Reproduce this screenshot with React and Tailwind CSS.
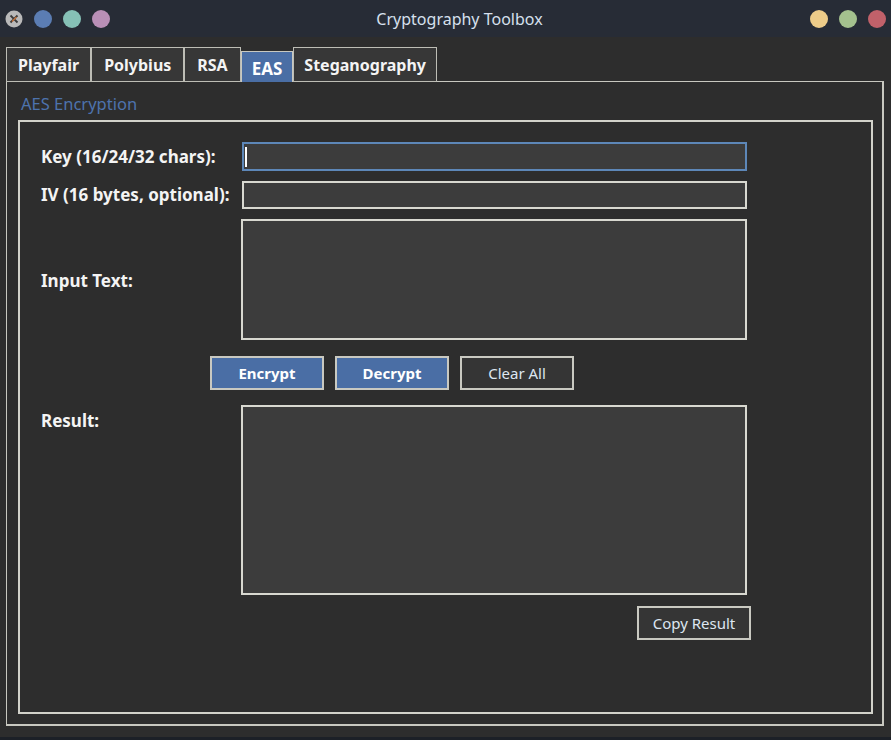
import React from 'react';

const tabs = [
  { name: 'Playfair', pad: 'px-[11px]' },
  { name: 'Polybius', pad: 'px-[12px]' },
  { name: 'RSA', pad: 'px-[12px]' },
  { name: 'EAS', pad: 'px-[10px]' },
  { name: 'Steganography', pad: 'px-[10px]' },
];

function Dot({ color }) {
  return <span className={`block w-[18px] h-[18px] rounded-full ${color}`} />;
}

export default function App() {
  return (
    <div
      className="w-[891px] h-[740px] bg-[#2d2d2d] flex flex-col overflow-hidden"
      style={{ fontFamily: '"Noto Sans", "Open Sans", sans-serif' }}
    >
      {/* title bar */}
      <div className="h-[37px] bg-[#272c36] flex items-center px-[5px] shrink-0">
        <div className="flex items-center gap-[11px] w-[120px]">
          <svg width="18" height="18" viewBox="0 0 18 18">
            <circle cx="9" cy="9" r="8.5" fill="#b9b9b9" />
            <path d="M5.5 5.5 L12.5 12.5 M12.5 5.5 L5.5 12.5" stroke="#3a3a3a" strokeWidth="1.8" />
            <path d="M7 11.5 L11.5 7" stroke="#c8733a" strokeWidth="1.2" />
          </svg>
          <Dot color="bg-[#5b7db3]" />
          <Dot color="bg-[#86c1b6]" />
          <Dot color="bg-[#b98fb6]" />
        </div>
        <div className="flex-1 text-center text-[16px] text-[#d6e0ee] pl-[28px]">Cryptography Toolbox</div>
        <div className="flex items-center gap-[11px] w-[120px] justify-end">
          <Dot color="bg-[#edcc89]" />
          <Dot color="bg-[#a4c18e]" />
          <Dot color="bg-[#c1616a]" />
        </div>
      </div>

      {/* notebook */}
      <div className="flex-1 pl-[6px] pr-[7px] pt-[10px] pb-[11px] flex flex-col">
        <div className="flex items-end h-[35px] relative z-10 -mb-px">
          {tabs.map(t =>
            t.name === 'EAS' ? (
              <div
                key={t.name}
                className={`h-[31px] ${t.pad} bg-[#4a6ea5] border-t border-l border-r border-[#c8c8c0] text-[17px] font-bold text-white flex items-center pt-[4px]`}
              >
                {t.name}
              </div>
            ) : (
              <div
                key={t.name}
                className={`h-[35px] ${t.pad} bg-[#373737] border border-[#bdbdb5] text-[16px] font-bold text-[#f4f4f4] flex items-center`}
              >
                {t.name}
              </div>
            )
          )}
        </div>
        <div className="flex-1 border border-[#c8c8c0] border-r-2 border-b-2 pl-[11px] pr-[9px] pt-[11px] pb-[10px] flex flex-col">
          <div className="text-[16.5px] text-[#4d73ad] pl-[3px] leading-[22px] mb-[5px]">AES Encryption</div>
          <div className="flex-1 border-2 border-[#d2d2ca] pl-[21px] pt-[20px] flex flex-col text-[#f4f4f4]">
            <div className="flex items-center h-[29px]">
              <div className="w-[201px] text-[17px] font-bold">Key (16/24/32 chars):</div>
              <div className="w-[505px] h-[29px] bg-[#3c3c3c] border-2 border-[#5d87b8] flex items-center pl-[1px]">
                <span className="block w-[2px] h-[20px] bg-white" />
              </div>
            </div>
            <div className="flex items-center h-[28px] mt-[10px]">
              <div className="w-[201px] text-[17px] font-bold">IV (16 bytes, optional):</div>
              <div className="w-[505px] h-[28px] bg-[#3c3c3c] border-2 border-[#d8d8d0]" />
            </div>
            <div className="flex items-center h-[121px] mt-[10px]">
              <div className="w-[200px] text-[17px] font-bold pt-[3px]">Input Text:</div>
              <div className="w-[506px] h-[121px] bg-[#3c3c3c] border-2 border-[#d8d8d0]" />
            </div>
            <div className="flex gap-[11px] mt-[16px] pl-[169px]">
              <button className="w-[114px] h-[34px] bg-[#4a6ea5] border-2 border-[#c9c9c1] text-[15px] font-bold text-white">Encrypt</button>
              <button className="w-[114px] h-[34px] bg-[#4a6ea5] border-2 border-[#c9c9c1] text-[15px] font-bold text-white">Decrypt</button>
              <button className="w-[114px] h-[34px] bg-[#353535] border-2 border-[#c9c9c1] text-[15px] text-[#dde6f0]">Clear All</button>
            </div>
            <div className="flex items-start h-[190px] mt-[15px]">
              <div className="w-[200px] text-[17px] font-bold pt-[3px]">Result:</div>
              <div className="w-[506px] h-[190px] bg-[#3c3c3c] border-2 border-[#d8d8d0]" />
            </div>
            <div className="flex mt-[11px] pl-[596px]">
              <button className="w-[114px] h-[34px] bg-[#353535] border-2 border-[#c9c9c1] text-[15px] text-[#dde6f0]">Copy Result</button>
            </div>
          </div>
        </div>
      </div>
      <div className="h-[3px] bg-[#1c2027] shrink-0" />
    </div>
  );
}
